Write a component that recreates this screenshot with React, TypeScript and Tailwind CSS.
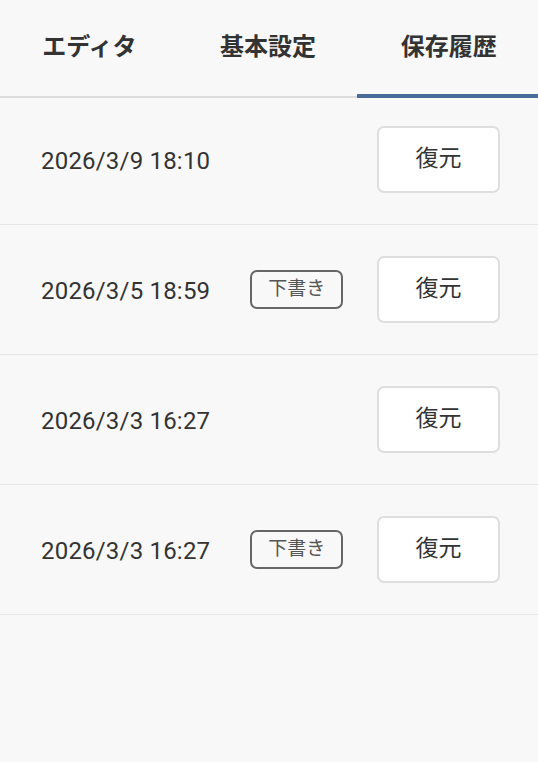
import { useState } from "react";

const tabs = ["エディタ", "基本設定", "保存履歴"];

const history = [
  { date: "2026/3/9 18:10", draft: false },
  { date: "2026/3/5 18:59", draft: true },
  { date: "2026/3/3 16:27", draft: false },
  { date: "2026/3/3 16:27", draft: true },
];

export default function App() {
  const [active, setActive] = useState(2);

  return (
    <div
      className="min-h-[762px] w-[538px] bg-[#f8f8f8] text-[#333]"
      style={{ fontFamily: '"Roboto", "Noto Sans CJK JP", sans-serif' }}
    >
      {/* Tabs */}
      <div className="flex h-[98px] border-b-2 border-[#dcdcdc]">
        {tabs.map((tab, i) => (
          <button
            key={tab}
            onClick={() => setActive(i)}
            className={`relative flex flex-1 items-center justify-center pb-[3px] text-[24px] font-bold text-[#333] ${
              i === 2 ? "pl-[2px]" : ""
            }`}
          >
            {tab}
            {active === i && (
              <span className="absolute bottom-[-2px] left-0 right-0 h-[4px] bg-[#4a6a9a]" />
            )}
          </button>
        ))}
      </div>

      {/* History list */}
      <div>
        {history.map((item, i) => (
          <div
            key={i}
            className={`flex items-center border-b border-[#e6e6e6] pl-[41px] pr-[38px] pb-[31px] ${
              i === 0 ? "pt-[28px]" : "pt-[31px]"
            }`}
          >
            <span className="pt-[3px] text-[24px] tracking-[0.2px] text-[#333]">
              {item.date}
            </span>
            {item.draft && (
              <span className="ml-[40px] flex h-[39px] w-[93px] items-center justify-center rounded-[7px] border-2 border-[#666] text-[19px] text-[#555]">
                下書き
              </span>
            )}
            <button className="ml-auto flex h-[67px] w-[123px] items-center justify-center rounded-[7px] border-2 border-[#dedede] bg-white text-[23px] text-[#333]">
              復元
            </button>
          </div>
        ))}
      </div>
    </div>
  );
}
